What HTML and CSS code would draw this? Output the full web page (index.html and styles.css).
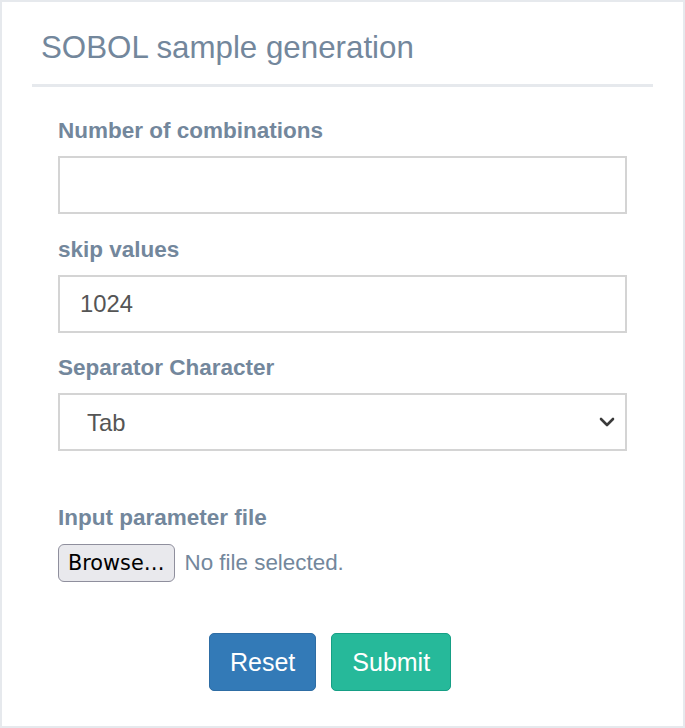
FILE: index.html
```html
<!DOCTYPE html>
<html lang="en">
<head>
<meta charset="utf-8">
<title>SOBOL sample generation</title>
<link rel="stylesheet" href="styles.css">
</head>
<body>
<div class="panel">
  <div class="panel-title">
    <h2>SOBOL sample generation</h2>
  </div>
  <form class="panel-content">
    <div class="form-group">
      <label class="field-label" for="combos">Number of combinations</label>
      <input class="form-control" id="combos" type="text" value="">
    </div>
    <div class="form-group">
      <label class="field-label" for="skip">skip values</label>
      <input class="form-control" id="skip" type="text" value="1024">
    </div>
    <div class="form-group">
      <label class="field-label" for="sep">Separator Character</label>
      <div class="select-wrap">
        <select class="form-control select" id="sep">
          <option>Tab</option>
        </select>
        <svg class="chevron" width="16" height="11" viewBox="0 0 16 11"><path d="M2 2 L8 8 L14 2" fill="none" stroke="#3a3a3a" stroke-width="2.6" stroke-linecap="round" stroke-linejoin="round"/></svg>
      </div>
    </div>
    <div class="form-group file-group">
      <label class="field-label">Input parameter file</label>
      <div class="file-row">
        <span class="browse-btn">Browse…</span>
        <span class="file-status">No file selected.</span>
      </div>
    </div>
    <div class="actions">
      <button type="button" class="btn btn-primary">Reset</button>
      <button type="button" class="btn btn-success">Submit</button>
    </div>
  </form>
</div>
</body>
</html>
```

FILE: styles.css
```css
html, body {
  margin: 0;
  padding: 0;
  background: #ffffff;
}

body {
  font-family: "Liberation Sans", Arial, sans-serif;
  color: #73879C;
}

.panel {
  box-sizing: border-box;
  width: 685px;
  height: 728px;
  border: 2px solid #E6E9ED;
  padding: 28px 30px 0;
  background: #ffffff;
}

.panel-title {
  padding: 0 0 19px 9px;
  border-bottom: 3px solid #E6E9ED;
}

.panel-title h2 {
  margin: 0;
  font-size: 31.3px;
  line-height: 35px;
  font-weight: 400;
  color: #73879C;
}

.panel-content {
  padding: 28px 26px 0;
}

.form-group {
  margin-bottom: 19.5px;
}

.field-label {
  display: block;
  font-size: 22.5px;
  line-height: 31px;
  font-weight: 700;
  color: #73879C;
  margin-bottom: 10px;
}

.form-control {
  display: block;
  box-sizing: border-box;
  width: 100%;
  height: 58px;
  margin: 0;
  padding: 0 20px;
  border: 2px solid #d4d4d4;
  border-radius: 0;
  background: #ffffff;
  font-family: "Liberation Sans", Arial, sans-serif;
  font-size: 23.8px;
  color: #555555;
  outline: none;
}

.select-wrap {
  position: relative;
}

.select {
  -webkit-appearance: none;
  -moz-appearance: none;
  appearance: none;
  padding-left: 27px;
}

.chevron {
  position: absolute;
  right: 12px;
  top: 24px;
  pointer-events: none;
}

.file-group {
  margin-top: 51px;
}

.file-row {
  display: flex;
  align-items: center;
  gap: 10px;
}

.browse-btn {
  box-sizing: border-box;
  height: 38px;
  margin-top: 1px;
  padding: 0 9px;
  display: inline-flex;
  align-items: center;
  background: #e9e9ed;
  border: 1.7px solid #8f8f9d;
  border-radius: 6px;
  font-family: "DejaVu Sans", sans-serif;
  font-size: 20.8px;
  color: #000000;
}

.file-status {
  font-size: 22.4px;
  color: #73879C;
}

.actions {
  display: flex;
  gap: 15px;
  padding-left: 151px;
  margin-top: 51px;
}

.btn {
  box-sizing: border-box;
  height: 58px;
  padding: 0 20px;
  border-radius: 5px;
  font-family: "Liberation Sans", Arial, sans-serif;
  font-size: 25px;
  color: #ffffff;
  cursor: pointer;
}

.btn-primary {
  background: #337ab7;
  border: 1.7px solid #2e6da4;
}

.btn-success {
  background: #26B99A;
  border: 1.7px solid #169F85;
}
```
